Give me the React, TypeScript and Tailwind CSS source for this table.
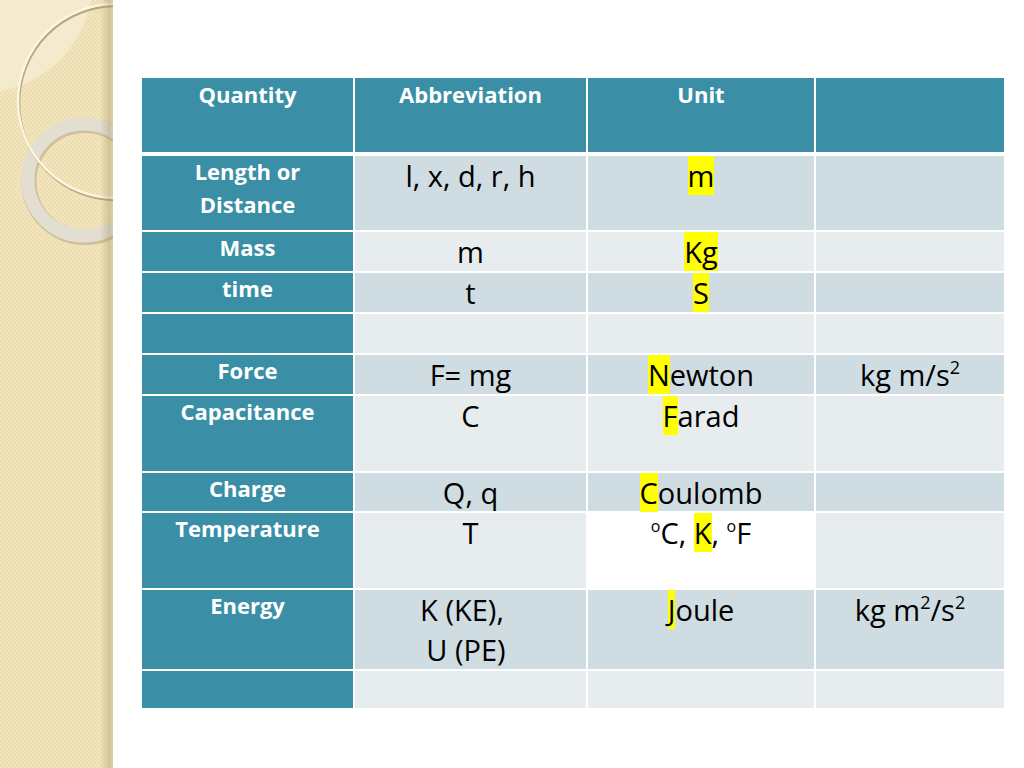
import React from "react";

type Row = {
  q: React.ReactNode;
  a: React.ReactNode;
  u: React.ReactNode;
  e: React.ReactNode;
  dark: boolean;
  whiteUnit?: boolean;
};

const Hi = ({ children }: { children: React.ReactNode }) => (
  <span className="bg-[#ffff00]">{children}</span>
);

const Sup = ({ children }: { children: React.ReactNode }) => (
  <span className="text-[18px] leading-none align-[12px]">{children}</span>
);

const Deg = () => <span className="text-[16px] leading-none align-[12px]">o</span>;

const rows: Row[] = [
  { q: <>Length or<br />Distance</>, a: "l, x, d, r, h", u: <Hi>m</Hi>, e: null, dark: true },
  { q: "Mass", a: "m", u: <Hi>Kg</Hi>, e: null, dark: false },
  { q: "time", a: "t", u: <Hi>S</Hi>, e: null, dark: true },
  { q: null, a: null, u: null, e: null, dark: false },
  {
    q: "Force",
    a: "F= mg",
    u: <><Hi>N</Hi>ewton</>,
    e: <>kg m/s<Sup>2</Sup></>,
    dark: true,
  },
  { q: "Capacitance", a: "C", u: <><Hi>F</Hi>arad</>, e: null, dark: false },
  { q: "Charge", a: "Q, q", u: <><Hi>C</Hi>oulomb</>, e: null, dark: true },
  {
    q: "Temperature",
    a: "T",
    u: <><Deg />C, <Hi>K</Hi>, <Deg />F</>,
    e: null,
    dark: false,
    whiteUnit: true,
  },
  {
    q: "Energy",
    a: (
      <>
        <div className="pr-[17px]">K (KE),</div>
        <div className="pr-[9px]">U (PE)</div>
      </>
    ),
    u: <><Hi>J</Hi>oule</>,
    e: <>kg m<Sup>2</Sup>/s<Sup>2</Sup></>,
    dark: true,
  },
  { q: null, a: null, u: null, e: null, dark: false },
];

function Strip() {
  return (
    <svg width="113" height="768" viewBox="0 0 113 768" className="block shrink-0">
      <defs>
        <pattern id="tex" width="4" height="4" patternUnits="userSpaceOnUse">
          <rect width="4" height="4" fill="#f2e4bc" />
          <rect x="0" y="0" width="2" height="2" fill="#e9d9a8" opacity="0.55" />
          <rect x="2" y="2" width="2" height="2" fill="#e9d9a8" opacity="0.55" />
        </pattern>
        <linearGradient id="edge" x1="0" x2="1" y1="0" y2="0">
          <stop offset="0" stopColor="#9c8a5c" stopOpacity="0" />
          <stop offset="0.75" stopColor="#9c8a5c" stopOpacity="0.35" />
          <stop offset="1" stopColor="#9c8a5c" stopOpacity="0.2" />
        </linearGradient>
        <clipPath id="clip">
          <rect width="113" height="768" />
        </clipPath>
      </defs>
      <g clipPath="url(#clip)">
        <rect width="113" height="768" fill="url(#tex)" />
        <circle cx="-20" cy="-20" r="113" fill="#f7eed6" opacity="0.7" />
        {/* thick ring */}
        <circle cx="85" cy="181.5" r="56" fill="none" stroke="#b3a682" strokeWidth="15" opacity="0.55" />
        <circle cx="84" cy="180" r="56" fill="none" stroke="#e2ded2" strokeWidth="13" />
        {/* thin ring */}
        <circle cx="116" cy="103" r="97" fill="none" stroke="#a8976a" strokeWidth="2.5" opacity="0.8" />
        <circle cx="115" cy="101" r="97" fill="none" stroke="#fbf5e2" strokeWidth="2.5" />
        <rect x="100" y="0" width="13" height="768" fill="url(#edge)" />
      </g>
    </svg>
  );
}

export default function App() {
  const head = "bg-[#3a8fa6] text-white font-bold text-[22px] leading-[33px] text-center font-['Open_Sans',sans-serif]";
  const body = "text-black text-[29px] leading-[40px] text-center font-['Open_Sans',sans-serif] overflow-visible";
  return (
    <div className="w-[1024px] h-[768px] bg-white flex overflow-hidden">
      <Strip />
      <div className="pl-[29px] pt-[78px]">
        <div className="grid grid-cols-[211px_231px_226px_188px] grid-rows-[76px_74px_39px_39px_39px_39px_75px_38px_75px_79px_37px] gap-[2px]">
          <div className={`${head} h-[74px]`}>Quantity</div>
          <div className={`${head} h-[74px]`}>Abbreviation</div>
          <div className={`${head} h-[74px]`}>Unit</div>
          <div className={`${head} h-[74px]`}></div>
          {rows.map((r, i) => {
            const bg = r.dark ? "bg-[#cfdce1]" : "bg-[#e7ecee]";
            return (
              <React.Fragment key={i}>
                <div className={head}>
                  <div className="-mt-[1px]">{r.q}</div>
                </div>
                <div className={`${body} ${bg}`}>{r.a}</div>
                <div className={`${body} ${r.whiteUnit ? "bg-white" : bg}`}>{r.u}</div>
                <div className={`${body} ${bg}`}>{r.e}</div>
              </React.Fragment>
            );
          })}
        </div>
      </div>
    </div>
  );
}
